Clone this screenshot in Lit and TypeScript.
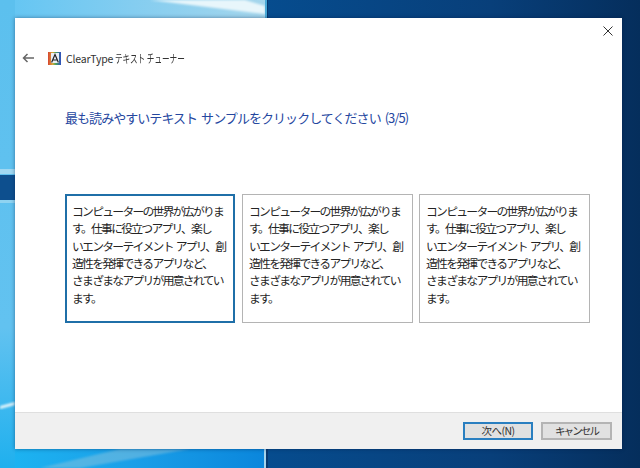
import { LitElement, html, css, svg } from "lit";
import { customElement } from "lit/decorators.js";

const LINES = [
  "コンピューターの世界が広がりま",
  "す。仕事に役立つアプリ、楽し",
  "いエンターテイメント アプリ、創",
  "造性を発揮できるアプリなど、",
  "さまざまなアプリが用意されてい",
  "ます。",
];

@customElement("app-root")
export class AppRoot extends LitElement {
  static styles = css`
    :host { display: block; width: 640px; height: 468px; overflow: hidden; position: relative;
      font-family: "Noto Sans CJK JP", "Noto Sans", sans-serif; }
    .wall { position: absolute; inset: 0; width: 640px; height: 468px; display: block; }
    .desk { position: relative; width: 640px; height: 468px; box-sizing: border-box; padding: 18px 18px 19px 15px; display: flex; }
    .win { flex: 1; display: flex; flex-direction: column; background: #fff; box-shadow: 0 0 4px rgba(0,20,60,.45); }
    .main { flex: 1; display: flex; flex-direction: column; min-height: 0; }
    .close { align-self: flex-end; display: flex; padding: 8px 9px 0 0; height: 14px; }
    .titlebar { display: flex; align-items: center; height: 18px; margin-top: 9px; padding-left: 7px; }
    .back { margin-right: 14px; display: block; }
    .logo { margin-right: 5px; display: block; }
    .title { font-size: 10.5px; color: #333; letter-spacing: -.2px; white-space: nowrap; }
    .kana { display: inline-block; margin-left: 2px; font-size: 11.5px; transform: scaleX(.66); transform-origin: left center; letter-spacing: 0; }
    h1 { margin: 41px 0 0 50px; font-size: 13px; line-height: 20px; font-weight: 400; color: #25479f; letter-spacing: -.95px; word-spacing: 2px; }
    .samples { display: flex; gap: 6px; margin: 66px 0 0 50px; }
    .sample { box-sizing: border-box; width: 171px; height: 129px; border: 1px solid #b4b4b4; padding: 7px 0 0 6px;
      font-size: 11.8px; line-height: 17.35px; color: #242424; letter-spacing: -1.72px; word-spacing: 2px; }
    .sample.sel { width: 170px; margin-right: 1px; border: 2px solid #1f6fa8; padding: 6px 0 0 5px; }
    .line { display: block; white-space: nowrap; }
    .foot { height: 37px; box-sizing: border-box; background: #f0f0f0; border-top: 1px solid #dfdfdf; display: flex;
      justify-content: flex-end; align-items: center; gap: 8px; padding: 0 10px 0 0; }
    .btn { box-sizing: border-box; height: 18px; background: #e1e1e1; border: 2px solid #b4b4b4; font-size: 10.5px; line-height: 14px;
      color: #333; display: flex; align-items: center; justify-content: center; }
    .btn.next { width: 70px; border-color: #2a7fc0; letter-spacing: -.5px; }
    .btn.cancel { width: 71px; letter-spacing: -1.9px; }
  `;

  sample(sel: boolean) {
    return html`<div class="sample ${sel ? "sel" : ""}">${LINES.map((l) => html`<span class="line">${l}</span>`)}</div>`;
  }

  render() {
    return html`
      <svg class="wall" viewBox="0 0 640 468" preserveAspectRatio="none">
        <defs>
          <linearGradient id="l" x1="0" y1="0" x2="0" y2="1">
            <stop offset="0" stop-color="#5cc0ee"/><stop offset=".7" stop-color="#62c2f0"/><stop offset="1" stop-color="#1fb0ee"/>
          </linearGradient>
          <linearGradient id="t" x1="0" y1="0" x2="1" y2="0">
            <stop offset="0" stop-color="#62c5f3"/><stop offset=".5" stop-color="#84cdf0"/><stop offset="1" stop-color="#a5d6ec"/>
          </linearGradient>
          <linearGradient id="d" x1="0" y1="0" x2="1" y2="0">
            <stop offset="0" stop-color="#064c8e"/><stop offset=".6" stop-color="#083f7a"/><stop offset="1" stop-color="#052e5c"/>
          </linearGradient>
          <linearGradient id="b" x1="0" y1="0" x2="1" y2="0">
            <stop offset="0" stop-color="#1db5f2"/><stop offset=".5" stop-color="#1a9fe8"/><stop offset="1" stop-color="#0a86dc"/>
          </linearGradient>
          <filter id="s"><feGaussianBlur stdDeviation="1.2"/></filter>
        </defs>
        <rect width="640" height="468" fill="#07386f"/>
        <rect x="268" width="372" height="468" fill="url(#d)"/>
        <rect width="266" height="20" fill="url(#t)"/>
        <polygon points="150,0 245,0 265,6 265,14" fill="#e8f6fb" filter="url(#s)"/>
        <rect x="265" width="2" height="20" fill="#4aaad8"/>
        <rect y="446" width="266" height="22" fill="url(#b)"/>
        <polygon points="80,468 190,449 120,449 40,468" fill="#7fc0de" opacity=".55" filter="url(#s)"/>
        <rect x="264" y="446" width="2" height="22" fill="#a5d4ec"/>
        <rect width="15" height="468" fill="url(#l)"/>
        <rect y="175" width="15" height="25" fill="#0d4f8e"/>
        <rect y="169" width="15" height="5" fill="#a0d8f2"/>
        <rect y="200" width="15" height="3" fill="#8fd3f1"/>
        <polygon points="0,406 15,402 15,405 0,409" fill="#e4f5fb" filter="url(#s)"/>
      </svg>
      <div class="desk">
        <div class="win">
          <div class="main">
            <div class="close">
              <svg width="10" height="10" viewBox="0 0 10 10"><path d="M.5.5l9 9M9.5.5l-9 9" stroke="#333" fill="none"/></svg>
            </div>
            <div class="titlebar">
              <svg class="back" width="12" height="10" viewBox="0 0 12 10"><path d="M12 5H1.5M5.5 1L1.5 5l4 4" stroke="#666" stroke-width="1.5" fill="none"/></svg>
              ${this.logo()}
              <span class="title">ClearType<span class="kana">テキスト チューナー</span></span>
            </div>
            <h1>最も読みやすいテキスト サンプルをクリックしてください (3/5)</h1>
            <div class="samples">
              ${this.sample(true)}
              ${this.sample(false)}
              ${this.sample(false)}
            </div>
          </div>
          <div class="foot">
            <div class="btn next">次へ(N)</div>
            <div class="btn cancel">キャンセル</div>
          </div>
        </div>
      </div>
    `;
  }

  logo() {
    return svg`<svg class="logo" width="13" height="13" viewBox="0 0 13 13">
      <defs><linearGradient id="g" x1="0" y1="0" x2="1" y2="0">
        <stop offset="0" stop-color="#d8432f"/><stop offset=".35" stop-color="#d8a93a"/><stop offset=".6" stop-color="#4aa35a"/><stop offset="1" stop-color="#2f4fc0"/>
      </linearGradient></defs>
      <rect width="13" height="13" fill="url(#g)"/>
      <rect x="3" y="1" width="8" height="10" fill="#e8eef4"/>
      <path d="M3.6 10.5L7 2.5l3.4 8M4.8 8h4.4" stroke="#222" stroke-width="1.2" fill="none"/>
    </svg>`;
  }
}
